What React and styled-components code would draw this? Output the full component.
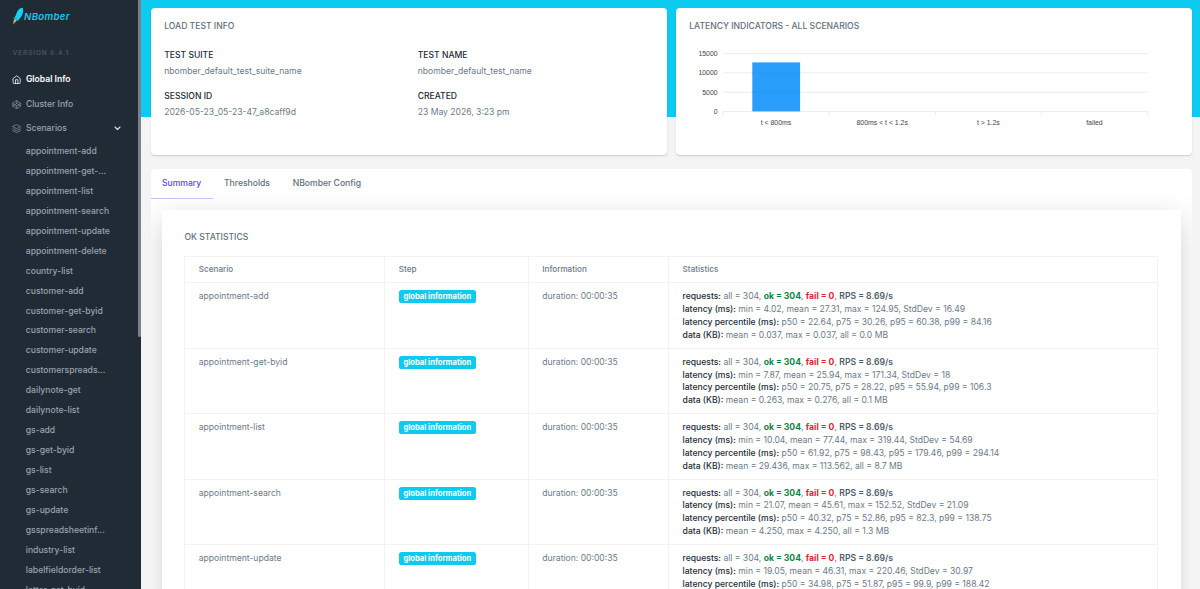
import React from 'react';
import styled, { createGlobalStyle } from 'styled-components';

const GlobalStyle = createGlobalStyle`
  *, *::before, *::after { box-sizing: border-box; }
  body {
    margin: 0;
    overflow: hidden;
    background: #f4f4f4;
    color: #6b7a88;
    font-family: Inter, "Liberation Sans", sans-serif;
    font-size: 8.58px;
    line-height: 12.875px;
  }
`;

const Page = styled.div`
  display: flex;
  height: 100vh;
  overflow: hidden;
`;

const Sidebar = styled.aside`
  position: relative;
  flex: none;
  width: 141px;
  height: 100%;
  overflow: hidden;
  background: #212b36;
`;

const ScrollThumb = styled.div`
  position: absolute;
  top: 0;
  right: 0;
  width: 3.5px;
  height: 337px;
  border-radius: 0 0 2px 2px;
  background: #7b8086;
`;

const Brand = styled.div`
  display: flex;
  align-items: flex-start;
  height: 46px;
  padding: 7px 0 0 11.5px;
`;

const BrandName = styled.span`
  margin: 4px 0 0 -0.4px;
  color: #1cc8e8;
  font-size: 9.6px;
  font-style: italic;
  font-weight: 600;
  letter-spacing: 0.32px;
`;

const Version = styled.div`
  height: 21.2px;
  padding: 1px 0 0 12.5px;
  color: #454f5a;
  font-size: 6.45px;
  font-weight: 700;
  letter-spacing: 0.9px;
`;

const NavItem = styled.div`
  display: flex;
  align-items: center;
  height: 24.7px;
  padding: 0 20.5px 0 12px;
  color: ${(p) => (p.$active ? '#ffffff' : '#98a3ae')};
  font-weight: ${(p) => (p.$active ? 600 : 500)};
`;

const NavIcon = styled.svg`
  flex: none;
  width: 9.4px;
  height: 9.4px;
  margin-right: 4.5px;
  fill: none;
  stroke: ${(p) => (p.$active ? '#ffffff' : '#808b96')};
  stroke-width: 2;
  stroke-linecap: round;
  stroke-linejoin: round;
`;

const Chevron = styled.svg`
  width: 7px;
  height: 5px;
  margin-left: auto;
  fill: none;
  stroke: #dde1e5;
  stroke-width: 1.1;
  stroke-linecap: round;
  stroke-linejoin: round;
`;

const SubItem = styled.div`
  height: 19.97px;
  padding: 3.5px 0 0 25.8px;
  color: #98a3ae;
  font-weight: 500;
  white-space: nowrap;
`;

const Main = styled.main`
  flex: 1;
  min-width: 0;
  padding: 7.5px 8px 0 9.6px;
  background: linear-gradient(#0ccaf0 0 117px, #f4f4f4 117px);
`;

const CardRow = styled.div`
  display: grid;
  grid-template-columns: minmax(0, 1fr) minmax(0, 1fr);
  gap: 8.6px;
  height: 147.6px;
`;

const Card = styled.section`
  padding: 12.7px 13.6px;
  border-radius: 4px;
  background: #fff;
  box-shadow: 0 1px 1.5px rgba(40, 50, 60, 0.2);
`;

const Title = styled.h2`
  margin: 0;
  color: #606e7b;
  font-size: 8.58px;
  font-weight: 500;
`;

const InfoGrid = styled.dl`
  display: grid;
  grid-template-columns: 1fr 1fr;
  row-gap: 11.8px;
  width: 507px;
  margin: 15.6px 0 0;
`;

const Term = styled.dt`
  margin-bottom: 3.5px;
  color: #212b36;
  font-weight: 500;
`;

const Detail = styled.dd`
  margin: 0;
`;

const Chart = styled.svg`
  display: block;
  width: 490px;
  height: 90px;
  margin: 6.8px 0 0 0.6px;
  font-family: "Liberation Sans", Arial, sans-serif;
  font-size: 6.9px;
  fill: #444;
`;

const Report = styled.section`
  height: 600px;
  margin-top: 13.9px;
  border-radius: 4px;
  background: #fff;
  overflow: hidden;
`;

const Tabs = styled.nav`
  display: flex;
  height: 29.7px;
`;

const Tab = styled.div`
  height: 29.7px;
  padding: 8.5px 11.4px 0;
  border-bottom: 1px solid ${(p) => (p.$active ? '#c6bff4' : 'transparent')};
  color: ${(p) => (p.$active ? '#5a3ff0' : '#606e7b')};
  font-weight: 500;
`;

const Panel = styled.div`
  height: 560px;
  margin: 11.3px 11px 0 11.4px;
  padding: 21.3px 22.6px 0 22.5px;
  background: #fff;
  box-shadow: 0 10px 28px rgba(0, 0, 0, 0.18);
`;

const Table = styled.div`
  margin-top: 12.1px;
  border: solid #f1f2f3;
  border-width: 1px 0 0 1px;
`;

const Row = styled.div`
  display: grid;
  grid-template-columns: 200px 143.5px 140.3px 1fr;
  height: ${(p) => (p.$head ? '26px' : '65.45px')};
`;

const Cell = styled.div`
  padding: ${(p) => (p.$head ? '6px' : '7px')} 13.3px 0;
  border: solid #f1f2f3;
  border-width: 0 1px 1px 0;
  font-weight: ${(p) => (p.$head ? 500 : 400)};
  font-size: ${(p) => (p.$head ? '8.15px' : '8.58px')};
  white-space: nowrap;
`;

const Badge = styled.span`
  display: block;
  width: 77px;
  height: 13px;
  border-radius: 2.6px;
  background: #0ccaf0;
  color: #fff;
  font-size: 7.6px;
  font-weight: 700;
  line-height: 13px;
  text-align: center;
`;

const Label = styled.span`
  color: #212b36;
  font-weight: 500;
`;

const Value = styled.span`
  color: ${(p) => p.$color};
  font-weight: ${(p) => p.$weight || 700};
`;

const scenarios = [
  'appointment-add', 'appointment-get-...', 'appointment-list', 'appointment-search',
  'appointment-update', 'appointment-delete', 'country-list', 'customer-add',
  'customer-get-byid', 'customer-search', 'customer-update', 'customerspreads...',
  'dailynote-get', 'dailynote-list', 'gs-add', 'gs-get-byid', 'gs-list', 'gs-search',
  'gs-update', 'gsspreadsheetinf...', 'industry-list', 'labelfieldorder-list', 'letter-get-byid',
];

const info = [
  ['TEST SUITE', 'nbomber_default_test_suite_name'],
  ['TEST NAME', 'nbomber_default_test_name'],
  ['SESSION ID', '2026-05-23_05-23-47_a8caff9d'],
  ['CREATED', '23 May 2026, 3:23 pm'],
];

const stats = [
  ['appointment-add', 'min = 4.02, mean = 27.31, max = 124.95, StdDev = 16.49', 'p50 = 22.64, p75 = 30.26, p95 = 60.38, p99 = 84.16', 'mean = 0.037, max = 0.037, all = 0.0 MB'],
  ['appointment-get-byid', 'min = 7.87, mean = 25.94, max = 171.34, StdDev = 18', 'p50 = 20.75, p75 = 28.22, p95 = 55.94, p99 = 106.3', 'mean = 0.263, max = 0.276, all = 0.1 MB'],
  ['appointment-list', 'min = 10.04, mean = 77.44, max = 319.44, StdDev = 54.69', 'p50 = 61.92, p75 = 98.43, p95 = 179.46, p99 = 294.14', 'mean = 29.436, max = 113.562, all = 8.7 MB'],
  ['appointment-search', 'min = 21.07, mean = 45.61, max = 152.52, StdDev = 21.09', 'p50 = 40.32, p75 = 52.86, p95 = 82.3, p99 = 138.75', 'mean = 4.250, max = 4.250, all = 1.3 MB'],
  ['appointment-update', 'min = 19.05, mean = 46.31, max = 220.46, StdDev = 30.97', 'p50 = 34.98, p75 = 51.87, p95 = 99.9, p99 = 188.42', null],
];

const ticks = [[15000, 13.5], [10000, 32.8], [5000, 52.2], [0, 71.5]];
const categories = [['t < 800ms', 86], ['800ms < t < 1.2s', 192.2], ['t > 1.2s', 298.3], ['failed', 404.4]];

function LatencyChart() {
  return (
    <Chart viewBox="0 0 490 90">
      {ticks.map(([label, y]) => (
        <g key={label}>
          <text x="27.6" y={y + 2.4} textAnchor="end">{label}</text>
          <line x1="33" x2="457.5" y1={y} y2={y} stroke="#e6e9ee" strokeWidth="0.8" />
        </g>
      ))}
      {[33, 139.1, 245.3, 351.4, 457.5].map((x) => (
        <line key={x} x1={x} x2={x} y1="71.5" y2="75" stroke="#e0e4ea" strokeWidth="0.7" />
      ))}
      <rect x="62.3" y="22.4" width="47.8" height="49" fill="#289dfc" />
      {[32.8, 52.2].map((y) => (
        <line key={y} x1="62.3" x2="110.1" y1={y} y2={y} stroke="#3295ee" strokeWidth="0.7" />
      ))}
      {categories.map(([label, x]) => (
        <text key={label} x={x} y="85.3" textAnchor="middle">{label}</text>
      ))}
    </Chart>
  );
}

function Rocket() {
  return (
    <svg width="13" height="19" viewBox="0 0 13 19">
      <path d="M3.2 11.500 1.200 14.300l.5.8-.8 2.600 2.500-2.700 1.600-1.700Z" fill="#e5b23b" />
      <path d="M3.6 8.600 1.200 12.300l2.100-.5 2.400 2.200.7-.2.800-2.500Z" fill="#17b4da" />
      <path d="M9.200.9C6.500 1.500 4.300 5.200 3.300 10.800L6.100 13C9.600 10 11.600 6 11.200 2.200 11 1.200 10.100.6 9.200.9Z" fill="#1cccf3" />
    </svg>
  );
}

export default function App() {
  return (
    <Page>
      <GlobalStyle />
      <Sidebar>
        <Brand><Rocket /><BrandName>NBomber</BrandName></Brand>
        <Version>VERSION 6.4.1</Version>
        <NavItem $active>
          <NavIcon $active viewBox="0 0 24 24">
            <path d="m3 9 9-7 9 7v11a2 2 0 0 1-2 2H5a2 2 0 0 1-2-2ZM9 22V12h6v10" />
          </NavIcon>
          Global Info
        </NavItem>
        <NavItem>
          <NavIcon viewBox="0 0 24 24">
            <path d="M12 2l10 6.500v7L12 22 2 15.500v-7ZM12 22v-6.500M22 8.500l-10 7-10-7M2 15.500l10-7 10 7M12 2v6.500" />
          </NavIcon>
          Cluster Info
        </NavItem>
        <NavItem>
          <NavIcon viewBox="0 0 24 24">
            <path d="m12 2 10 5-10 5L2 7ZM2 12l10 5 10-5M2 17l10 5 10-5" />
          </NavIcon>
          Scenarios
          <Chevron viewBox="0 0 7 5"><path d="m1 1 2.500 2.500L6 1" /></Chevron>
        </NavItem>
        {scenarios.map((name) => <SubItem key={name}>{name}</SubItem>)}
        <ScrollThumb />
      </Sidebar>
      <Main>
        <CardRow>
          <Card>
            <Title>LOAD TEST INFO</Title>
            <InfoGrid>
              {info.map(([term, detail]) => (
                <div key={term}><Term>{term}</Term><Detail>{detail}</Detail></div>
              ))}
            </InfoGrid>
          </Card>
          <Card>
            <Title>LATENCY INDICATORS - ALL SCENARIOS</Title>
            <LatencyChart />
          </Card>
        </CardRow>
        <Report>
          <Tabs>
            <Tab $active>Summary</Tab>
            <Tab>Thresholds</Tab>
            <Tab>NBomber Config</Tab>
          </Tabs>
          <Panel>
            <Title>OK STATISTICS</Title>
            <Table>
              <Row $head>
                {['Scenario', 'Step', 'Information', 'Statistics'].map((h) => <Cell $head key={h}>{h}</Cell>)}
              </Row>
              {stats.map(([name, latency, percentile, data]) => (
                <Row key={name}>
                  <Cell>{name}</Cell>
                  <Cell><Badge>global information</Badge></Cell>
                  <Cell>duration: 00:00:35</Cell>
                  <Cell>
                    <div>
                      <Label>requests:</Label> all = 304, <Value $color="#0b8345">ok = 304</Value>,{' '}
                      <Value $color="#dc2436">fail = 0</Value>, <Value $color="#4c5a69" $weight={600}>RPS = 8.69/s</Value>
                    </div>
                    <div><Label>latency (ms):</Label> {latency}</div>
                    <div><Label>latency percentile (ms):</Label> {percentile}</div>
                    {data && <div><Label>data (KB):</Label> {data}</div>}
                  </Cell>
                </Row>
              ))}
            </Table>
          </Panel>
        </Report>
      </Main>
    </Page>
  );
}
